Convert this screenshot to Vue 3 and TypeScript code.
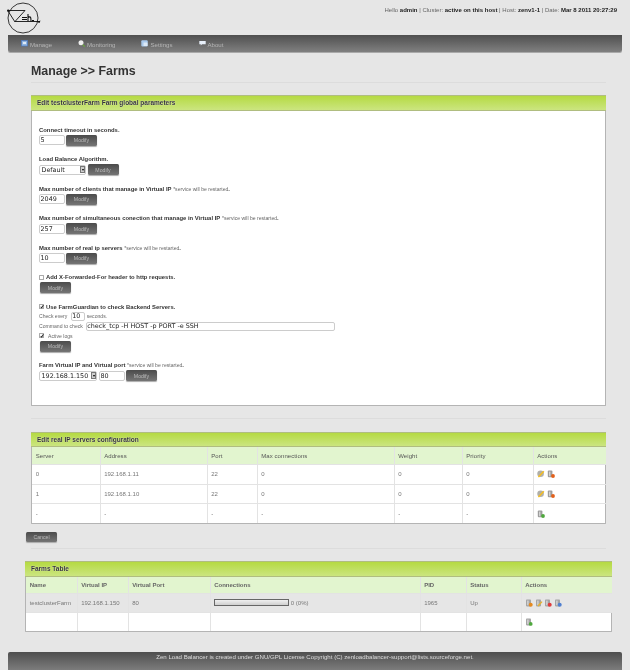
<script setup lang="ts">
interface Field { label: string; value: string }
const fieldsTop: Field[] = [
  { label: 'Max number of clients that manage in Virtual IP', value: '2049' },
  { label: 'Max number of simultaneous conection that manage in Virtual IP', value: '257' },
  { label: 'Max number of real ip servers', value: '10' },
]
const serverCols = [68, 107, 50, 137, 68, 71, 73]
const serverHead = ['Server', 'Address', 'Port', 'Max connections', 'Weight', 'Priority', 'Actions']
const serverRows = [
  { c: ['0', '192.168.1.11', '22', '0', '0', '0'], icons: ['edit', 'del'] },
  { c: ['1', '192.168.1.10', '22', '0', '0', '0'], icons: ['edit', 'del'] },
  { c: ['-', '-', '-', '-', '-', '-'], icons: ['add'] },
]
const farmCols = [51, 51, 82, 210, 46, 55, 91]
const farmHead = ['Name', 'Virtual IP', 'Virtual Port', 'Connections', 'PID', 'Status', 'Actions']
const badge: Record<string, string> = { del: '#e2601a', add: '#4fa83d', stop: '#e03a3a', info: '#4f7fd0', start: '#e58a1f' }
</script>

<template>
  <div class="page">
    <header class="top">
      <svg class="logo" viewBox="0 0 34 34" aria-label="Zen logo">
        <circle cx="16" cy="16" r="15" fill="none" stroke="#222" stroke-width="0.9" />
        <path d="M1 8.5H18L8 19.5H33M1 9L8 20" fill="none" stroke="#111" stroke-width="0.9" />
        <path d="M15 15.5h5M15 17.5h5M21 12v7M21 15.5c3-2 3 1 3 3.5M25 18.5h2" fill="none" stroke="#111" stroke-width="1.1" />
        <path d="M30 20l3.5-1.5-1 2.5z" fill="#111" />
        <circle cx="1.2" cy="8.6" r="1.2" fill="#111" />
      </svg>
      <p class="status">
        Hello <b>admin</b> | Cluster: <b>active on this host</b> | Host: <b>zenv1-1</b> | Date: <b>Mar 8 2011 20:27:29</b>
      </p>
    </header>

    <nav class="nav">
      <a class="nav-item">
        <svg class="nav-ico" viewBox="0 0 7 7"><rect x=".5" y=".5" width="6" height="5.5" fill="#8fb4e0" stroke="#4a78c0" stroke-width=".7" /><rect x="2" y="2" width="3" height="2" fill="#dfe9f5" /></svg>
        Manage
      </a>
      <a class="nav-item">
        <svg class="nav-ico" viewBox="0 0 7 7"><circle cx="3" cy="2.8" r="2.5" fill="#eee" /><path d="M4.6 4.6L6.8 6.6" stroke="#6aa83c" stroke-width="1.2" /></svg>
        Monitoring
      </a>
      <a class="nav-item">
        <svg class="nav-ico" viewBox="0 0 7 7"><rect x=".3" y=".3" width="6.4" height="6.2" rx="1" fill="#a9c9ec" /><rect x="2.5" y="2.5" width="4" height="3.5" fill="#dce9f6" /></svg>
        Settings
      </a>
      <a class="nav-item">
        <svg class="nav-ico" viewBox="0 0 7 7"><path d="M.3 1h6.4v3.2H3L1.8 5.6V4.2H.3z" fill="#e8f0fa" /></svg>
        About
      </a>
    </nav>

    <main class="main">
      <h1 class="title">Manage &gt;&gt; Farms</h1>

      <section class="box">
        <h2 class="box-head">Edit testclusterFarm Farm global parameters</h2>
        <form class="form" @submit.prevent>
          <div class="field">
            <div class="lab"><b>Connect timeout in seconds.</b></div>
            <div class="ctl"><input class="inp" value="5" /><button class="btn">Modify</button></div>
          </div>
          <div class="field">
            <div class="lab"><b>Load Balance Algorithm.</b></div>
            <div class="ctl">
              <span class="sel-wrap sel-alg"><select class="sel"><option>Default</option></select></span>
              <button class="btn btn-near">Modify</button>
            </div>
          </div>
          <div v-for="f in fieldsTop" :key="f.label" class="field">
            <div class="lab"><b>{{ f.label }}</b> <small>*service will be restarted</small><b>.</b></div>
            <div class="ctl"><input class="inp" :value="f.value" /><button class="btn">Modify</button></div>
          </div>
          <div class="field">
            <label class="lab chk-line"><input type="checkbox" class="chk" /><b>Add X-Forwarded-For header to http requests.</b></label>
            <div class="ctl"><button class="btn btn-in">Modify</button></div>
          </div>
          <div class="field">
            <label class="lab chk-line"><input type="checkbox" class="chk" checked /><b>Use FarmGuardian to check Backend Servers.</b></label>
            <div class="sub sub-every">Check every <input class="inp inp-every" value="10" /> <span class="after">seconds.</span></div>
            <div class="sub">Command to check <input class="inp inp-cmd" value="check_tcp -H HOST -p PORT -e SSH" /></div>
            <label class="sub logs"><input type="checkbox" class="chk" checked /><span>Active logs</span></label>
            <div class="ctl"><button class="btn btn-in">Modify</button></div>
          </div>
          <div class="field last">
            <div class="lab"><b>Farm Virtual IP and Virtual port</b> <small>*service will be restarted</small><b>.</b></div>
            <div class="ctl">
              <span class="sel-wrap sel-ip"><select class="sel"><option>192.168.1.150</option></select></span>
              <input class="inp inp-port" value="80" />
              <button class="btn btn-tight">Modify</button>
            </div>
          </div>
        </form>
      </section>

      <hr class="rule" />

      <section class="box">
        <h2 class="box-head">Edit real IP servers configuration</h2>
        <table class="tbl">
          <colgroup><col v-for="(w, i) in serverCols" :key="i" :style="{ width: w + 'px' }" /></colgroup>
          <thead><tr><th v-for="h in serverHead" :key="h">{{ h }}</th></tr></thead>
          <tbody>
            <tr v-for="(r, i) in serverRows" :key="i">
              <td v-for="(c, j) in r.c" :key="j">{{ c }}</td>
              <td class="acts">
                <svg v-for="k in r.icons" :key="k" class="ico" viewBox="0 0 8 8">
                  <template v-if="k === 'edit'">
                    <circle cx="3.6" cy="3.8" r="3.3" fill="#b0b0ac" />
                    <path d="M1.4 7L6.8 1.2" stroke="#f5bd20" stroke-width="1.5" />
                  </template>
                  <template v-else>
                    <rect x=".8" y=".6" width="4.6" height="6.6" rx="1" fill="#9c9c9c" />
                    <rect x="2" y="1.6" width="1.4" height="4.6" fill="#d4d4d4" />
                    <circle cx="6" cy="6" r="1.9" :fill="badge[k]" />
                  </template>
                </svg>
              </td>
            </tr>
          </tbody>
        </table>
      </section>

      <button class="btn btn-cancel">Cancel</button>
      <hr class="rule rule-b" />

      <section class="box box-wide">
        <h2 class="box-head">Farms Table</h2>
        <table class="tbl tbl-farm">
          <colgroup><col v-for="(w, i) in farmCols" :key="i" :style="{ width: w + 'px' }" /></colgroup>
          <thead><tr><th v-for="h in farmHead" :key="h">{{ h }}</th></tr></thead>
          <tbody>
            <tr class="grey">
              <td>testclusterFarm</td>
              <td>192.168.1.150</td>
              <td>80</td>
              <td><span class="bar"></span> 0 (0%)</td>
              <td>1965</td>
              <td>Up</td>
              <td class="acts">
                <svg v-for="k in ['start', 'edit', 'stop', 'info']" :key="k" class="ico" viewBox="0 0 8 8">
                  <rect x="1" y=".6" width="5" height="6.8" rx=".8" fill="#a4a4a4" />
                  <rect x="2.2" y="1.6" width="1.4" height="4.6" fill="#d8d8d8" />
                  <path v-if="k === 'edit'" d="M3 7L7 2.6" stroke="#e8b32a" stroke-width="1.4" />
                  <circle v-else cx="5.7" cy="5.7" r="2" :fill="badge[k]" />
                </svg>
              </td>
            </tr>
            <tr>
              <td></td><td></td><td></td><td></td><td></td><td></td>
              <td class="acts">
                <svg class="ico" viewBox="0 0 8 8">
                  <rect x="1" y=".6" width="5" height="6.8" rx=".8" fill="#a4a4a4" />
                  <rect x="2.2" y="1.6" width="1.4" height="4.6" fill="#d8d8d8" />
                  <circle cx="5.7" cy="5.9" r="1.9" fill="#4fa83d" />
                </svg>
              </td>
            </tr>
          </tbody>
        </table>
      </section>
    </main>

    <footer class="foot">Zen Load Balancer is created under GNU/GPL License Copyright (C) zenloadbalancer-support@lists.sourceforge.net.</footer>
  </div>
</template>

<style>
html, body { margin: 0; background: #e6e6e6; overflow: hidden; }
</style>

<style scoped>
.page {
  height: 670px; overflow: hidden; background: #e6e6e6; display: flex; flex-direction: column;
  font-family: "Liberation Sans", Arial, sans-serif; font-size: 6px; color: #555;
  filter: blur(0.35px);
}
.top { height: 35px; display: flex; justify-content: space-between; padding: 2px 13px 0 7px; box-sizing: border-box; }
.logo { width: 34px; height: 34px; }
.status { margin: 5px 0 0; line-height: 6px; color: #666; white-space: nowrap; }
.status b { color: #222; }
.nav {
  margin: 0 8px; height: 17px; box-sizing: border-box; padding: 0 0 0 13px; display: flex; gap: 26px;
  background: linear-gradient(#4f4f4f, #808080); border-radius: 0 0 2px 2px; box-shadow: 0 1px 0 #aaa;
}
.nav-item { display: flex; align-items: center; color: #b5b5b5; gap: 2px; line-height: 1; padding-top: 3px; font-size: 6.1px; }
.nav-ico { width: 7px; height: 7px; margin-top: -4px; }
.main { padding: 0 24px 0 31px; flex: 1; display: flex; flex-direction: column; }
.title {
  margin: 10px 0 0; padding: 0 0 3px; height: 17px; line-height: 18px; font-size: 12.4px; font-weight: bold; color: #333;
  border-bottom: 1px solid #dcdcdc;
}
.box { margin-top: 12px; background: #fff; border: 1px solid #b4b4b4; border-top: 0; border-radius: 1px; box-sizing: border-box; width: 575px; }
.box-head {
  margin: 0 -1px; height: 15.5px; line-height: 14.5px; padding-left: 6px; font-size: 6.5px; font-weight: bold; color: #333;
  background: linear-gradient(#b5da42, #cbe580); border: 1px solid #b0bd80; border-width: 1px 0; box-sizing: border-box;
  text-shadow: 0 0 1px #fff;
}
.form { padding: 14px 7px 23.5px; }
.field { margin-bottom: 8.5px; }
.field.last { margin-bottom: 0; }
.lab { height: 10px; line-height: 10px; color: #333; white-space: nowrap; }
.lab b { font-weight: bold; font-size: 5.9px; color: #333; }
.lab small { font-size: 5.1px; color: #666; }
.chk-line { display: flex; align-items: center; gap: 2px; }
.ctl { height: 11px; display: flex; align-items: center; }
.inp {
  box-sizing: border-box; width: 26px; height: 10px; padding: 0 0 0 .5px; margin: 0; border: 1px solid #ccc; border-radius: 2px;
  background: #fff; font: 6.4px "DejaVu Sans", sans-serif; color: #222; outline: 0;
}
.sel-wrap { position: relative; display: block; height: 10px; }
.sel-wrap::after {
  content: ""; position: absolute; right: 1px; top: 1.5px; width: 5.5px; height: 7px; box-sizing: border-box;
  background: #cfcfcf; border: .5px solid #777; pointer-events: none;
}
.sel-wrap::before {
  content: ""; position: absolute; z-index: 1; right: 2.4px; top: 4.2px; border: 1.4px solid transparent; border-top: 2px solid #000; border-bottom: 0; pointer-events: none;
}
.sel {
  display: block; appearance: none; box-sizing: border-box; width: 100%; height: 10px; padding: 0 0 0 1.5px; margin: 0; border: 1px solid #ccc; border-radius: 2px; background: #fff;
  font: 6.4px "DejaVu Sans", sans-serif; color: #222;
}
.sel-alg { width: 47px; }
.sel-ip { width: 58px; }
.inp-port { margin-left: 2px; }
.btn {
  box-sizing: border-box; width: 31px; height: 11px; padding: 0; margin: 0 0 0 1px; border: 0; border-radius: 1.5px; font: 5.2px "Liberation Sans", sans-serif; color: #bcbcbc;
  background: linear-gradient(#4b4b4b, #757575); box-shadow: 0 1px 1px #aaa;
}
.btn-near { margin-left: 1.5px; }
.btn-tight { margin-left: 1px; }
.btn-in { margin-left: 1px; }
.sub { display: flex; align-items: center; height: 10px; font-size: 5.1px; color: #666; white-space: pre; }
.sub-every { height: 9.5px; }
.inp-every { width: 14px; height: 9px; margin: 0 0 0 2px; font-size: 6.4px; }
.after { margin-left: 2px; }
.inp-cmd { width: 249px; height: 9px; margin-left: 1.5px; font-size: 6.4px; }
.logs { height: 9.5px; gap: 4px; }
.chk {
  appearance: none; position: relative; box-sizing: border-box; width: 5px; height: 5px; margin: 0; flex: none;
  background: #fff; border: .7px solid #aaa; border-radius: .5px;
}
.chk:checked::after {
  content: ""; position: absolute; left: .3px; top: -.2px; width: 3.4px; height: 3.8px; background: #111;
  clip-path: polygon(0 55%, 25% 45%, 40% 65%, 80% 0, 100% 10%, 45% 100%);
}
.rule { margin: 12.5px 0 0; border: 0; border-top: 1px solid #dcdcdc; height: 0; width: 575px; }
.box + .rule + .box { margin-top: 12.5px; }
.tbl { border-collapse: collapse; table-layout: fixed; width: 100%; }
.tbl th, .tbl td { padding: 0 0 0 3.7px; border: 1px solid #e3e3e3; border-top: 0; text-align: left; font-size: 6px; overflow: hidden; white-space: nowrap; }
.tbl tr > :first-child { border-left: 0; }
.tbl tr > :last-child { border-right: 0; }
.tbl tbody tr:last-child td { border-bottom: 0; }
.tbl th { height: 17px; background: #e2f5cf; color: #555; font-weight: normal; letter-spacing: .08px; }
.tbl td { height: 18.7px; color: #777; }
.acts svg { margin-right: 1.5px; }
.ico { width: 8px; height: 8px; vertical-align: middle; }
.btn-cancel { margin: 7.5px 0 0 -5px; height: 10.5px; align-self: flex-start; }
.rule-b { margin-top: 5.5px; }
.box-wide { margin: 12.5px 0 0 -6px; width: 587px; }
.tbl-farm th { height: 16px; font-weight: bold; letter-spacing: 0; color: #666; }
.tbl-farm td { height: 18.3px; }
.grey td { background: #e6e6e6; }
.bar { display: inline-block; width: 75px; height: 6.5px; box-sizing: border-box; border: 1px solid #666; background: linear-gradient(#f0f0f0, #cfcfcf); vertical-align: -.5px; }
.foot {
  margin: 0 8px; height: 18px; padding-top: 2px; box-sizing: border-box; text-align: center; font-size: 6.1px; line-height: 6px; color: #ddd;
  background: linear-gradient(#4f4f4f, #7c7c7c); border-radius: 2px 2px 0 0;
}
</style>
